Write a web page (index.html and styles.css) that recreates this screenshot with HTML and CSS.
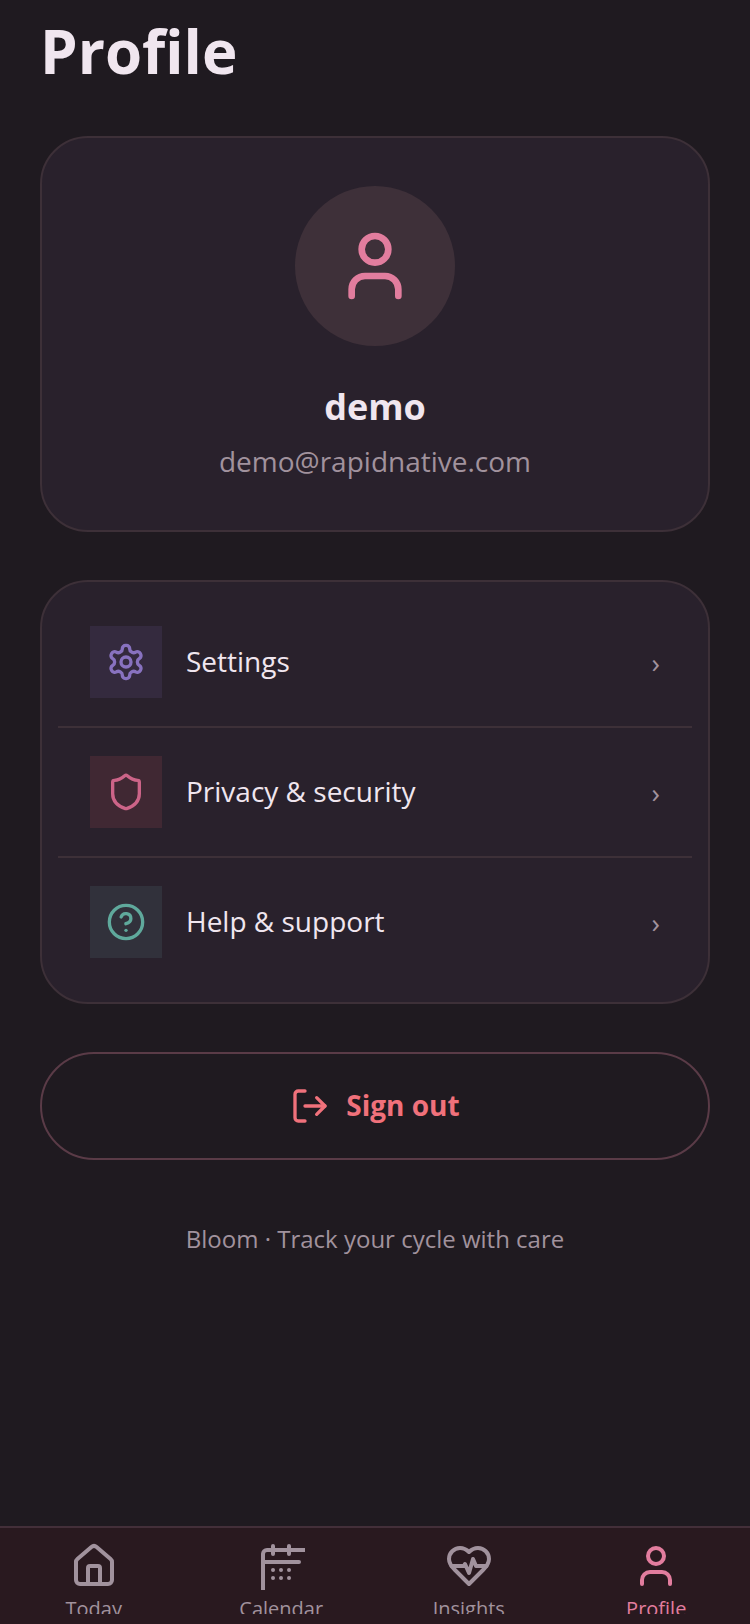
FILE: index.html
```html
<!DOCTYPE html>
<html lang="en">
<head>
<meta charset="utf-8">
<meta name="viewport" content="width=device-width, initial-scale=1">
<title>Profile</title>
<link rel="stylesheet" href="styles.css">
</head>
<body>
<main class="screen">
  <h1 class="title">Profile</h1>

  <section class="card user">
    <div class="avatar">
      <svg class="icon icon-xl" viewBox="0 0 24 24" aria-hidden="true"><path d="M19 21v-2a4 4 0 0 0-4-4H9a4 4 0 0 0-4 4v2"/><circle cx="12" cy="7" r="4"/></svg>
    </div>
    <h2 class="name">demo</h2>
    <p class="email">demo@rapidnative.com</p>
  </section>

  <nav class="card menu" aria-label="Account">
    <a class="row" href="#settings">
      <span class="tile tile-violet"><svg class="icon icon-md" viewBox="0 0 24 24" aria-hidden="true"><path d="M12.22 2h-.44a2 2 0 0 0-2 2v.18a2 2 0 0 1-1 1.73l-.43.25a2 2 0 0 1-2 0l-.15-.08a2 2 0 0 0-2.73.73l-.22.38a2 2 0 0 0 .73 2.73l.15.1a2 2 0 0 1 1 1.72v.51a2 2 0 0 1-1 1.74l-.15.09a2 2 0 0 0-.73 2.73l.22.38a2 2 0 0 0 2.73.73l.15-.08a2 2 0 0 1 2 0l.43.25a2 2 0 0 1 1 1.73V20a2 2 0 0 0 2 2h.44a2 2 0 0 0 2-2v-.18a2 2 0 0 1 1-1.73l.43-.25a2 2 0 0 1 2 0l.15.08a2 2 0 0 0 2.73-.73l.22-.39a2 2 0 0 0-.73-2.73l-.15-.08a2 2 0 0 1-1-1.74v-.5a2 2 0 0 1 1-1.74l.15-.09a2 2 0 0 0 .73-2.73l-.22-.38a2 2 0 0 0-2.73-.73l-.15.08a2 2 0 0 1-2 0l-.43-.25a2 2 0 0 1-1-1.73V4a2 2 0 0 0-2-2z"/><circle cx="12" cy="12" r="3"/></svg></span>
      <span class="label">Settings</span>
      <span class="chevron">›</span>
    </a>
    <a class="row" href="#privacy">
      <span class="tile tile-rose"><svg class="icon icon-md" viewBox="0 0 24 24" aria-hidden="true"><path d="M20 13c0 5-3.5 7.5-7.66 8.95a1 1 0 0 1-.67-.01C7.5 20.5 4 18 4 13V6a1 1 0 0 1 1-1c2 0 4.5-1.2 6.24-2.72a1.17 1.17 0 0 1 1.52 0C14.51 3.81 17 5 19 5a1 1 0 0 1 1 1z"/></svg></span>
      <span class="label">Privacy &amp; security</span>
      <span class="chevron">›</span>
    </a>
    <a class="row" href="#help">
      <span class="tile tile-teal"><svg class="icon icon-md" viewBox="0 0 24 24" aria-hidden="true"><circle cx="12" cy="12" r="10"/><path d="M9.09 9a3 3 0 0 1 5.83 1c0 2-3 3-3 3"/><path d="M12 17h.01"/></svg></span>
      <span class="label">Help &amp; support</span>
      <span class="chevron">›</span>
    </a>
  </nav>

  <button class="sign-out" type="button">
    <svg class="icon icon-md" viewBox="0 0 24 24" aria-hidden="true"><path d="m16 17 5-5-5-5"/><path d="M21 12H9"/><path d="M9 21H5a2 2 0 0 1-2-2V5a2 2 0 0 1 2-2h4"/></svg>
    <span class="sign-out-text">Sign out</span>
  </button>

  <p class="tagline">Bloom · Track your cycle with care</p>
</main>

<nav class="tabs" aria-label="Main">
  <a class="tab" href="#today">
    <svg class="icon icon-lg" viewBox="0 0 24 24" aria-hidden="true"><path d="M15 21v-8a1 1 0 0 0-1-1h-4a1 1 0 0 0-1 1v8"/><path d="M3 10a2 2 0 0 1 .709-1.528l7-5.999a2 2 0 0 1 2.582 0l7 5.999A2 2 0 0 1 21 10v9a2 2 0 0 1-2 2H5a2 2 0 0 1-2-2z"/></svg>
    <span>Today</span>
  </a>
  <a class="tab" href="#calendar">
    <svg class="icon icon-lg" viewBox="0 0 24 24" aria-hidden="true"><path d="M8 2v4M16 2v4"/><rect x="3" y="4" width="36" height="36" rx="2"/><path d="M3 10h18M8 14h.01M12 14h.01M16 14h.01M8 18h.01M12 18h.01M16 18h.01"/></svg>
    <span>Calendar</span>
  </a>
  <a class="tab" href="#insights">
    <svg class="icon icon-lg" viewBox="0 0 24 24" aria-hidden="true"><path d="M19 14c1.49-1.46 3-3.21 3-5.5A5.5 5.5 0 0 0 16.5 3c-1.76 0-3 .5-4.5 2-1.5-1.5-2.74-2-4.5-2A5.5 5.5 0 0 0 2 8.5c0 2.3 1.5 4.05 3 5.5l7 7Z"/><path d="M3.22 12H9.5l.5-1 2 4.5 2-7 1.5 3.5h5.27"/></svg>
    <span>Insights</span>
  </a>
  <a class="tab tab-active" href="#profile" aria-current="page">
    <svg class="icon icon-lg" viewBox="0 0 24 24" aria-hidden="true"><path d="M19 21v-2a4 4 0 0 0-4-4H9a4 4 0 0 0-4 4v2"/><circle cx="12" cy="7" r="4"/></svg>
    <span>Profile</span>
  </a>
</nav>
</body>
</html>
```
FILE: styles.css
```css
:root {
  --bg: #1f1a20;
  --card: #29212c;
  --line: #3d3038;
  --text: #f0e6ef;
  --muted: #a1929d;
  --pink: #e27d9e;
}

* { box-sizing: border-box; }

body {
  display: flex;
  flex-direction: column;
  min-height: 100vh;
  margin: 0;
  background: var(--bg);
  color: var(--text);
  font-family: "Open Sans", "Noto Sans", sans-serif;
  font-size: 28px;
  line-height: 40px;
}

h1, h2, p { margin: 0; }
a { color: inherit; text-decoration: none; }

.icon {
  flex: none;
  fill: none;
  stroke: currentColor;
  stroke-width: 2;
  stroke-linecap: round;
  stroke-linejoin: round;
}
.icon-md { width: 40px; height: 40px; }
.icon-lg { width: 48px; height: 48px; }
.icon-xl { width: 80px; height: 80px; }

.screen {
  display: flex;
  flex: 1;
  flex-direction: column;
  gap: 48px;
  padding: 16px 40px 48px;
}

.title {
  padding-bottom: 2px;
  font-size: 60px;
  font-weight: 700;
  line-height: 70px;
}

.card {
  border: 2px solid var(--line);
  border-radius: 48px;
  background: var(--card);
}

.user {
  display: flex;
  flex-direction: column;
  align-items: center;
  padding: 48px;
}

.avatar {
  display: grid;
  place-items: center;
  width: 160px;
  height: 160px;
  margin-bottom: 32px;
  border-radius: 50%;
  background: #3e3039;
  color: var(--pink);
}

.name {
  margin-bottom: 4px;
  font-size: 36px;
  font-weight: 700;
  line-height: 58px;
}

.email {
  color: var(--muted);
  line-height: 42px;
}

.menu { padding: 16px; }

.row {
  display: flex;
  align-items: center;
  gap: 24px;
  padding: 28px 32px;
}
.row + .row { border-top: 2px solid var(--line); }

.tile {
  display: grid;
  place-items: center;
  width: 72px;
  height: 72px;
}
.tile-violet { background: #342a3e; color: #8872bf; }
.tile-rose { background: #402833; color: #cc6488; }
.tile-teal { background: #31313b; color: #5fa99c; }

.label { flex: 1; }
.label, .sign-out-text { padding-bottom: 2px; }
.chevron { color: var(--muted); }

.sign-out {
  display: flex;
  align-items: center;
  justify-content: center;
  gap: 16px;
  padding: 31px;
  border: 2px solid #5a3b47;
  border-radius: 54px;
  background: transparent;
  color: #f0717b;
  font: inherit;
  font-weight: 700;
}

.tagline {
  margin-top: 16px;
  color: var(--muted);
  font-size: 24px;
  line-height: 30px;
  text-align: center;
}

.tabs {
  position: sticky;
  bottom: 0;
  display: flex;
  padding: 14px 0 10px;
  border-top: 2px solid #432f39;
  background: #29191f;
}

.tab {
  display: flex;
  flex: 1;
  flex-direction: column;
  align-items: center;
  gap: 4px;
  height: 72px;
  overflow: hidden;
  color: var(--muted);
  font-size: 20px;
  line-height: 30px;
}
.tab-active { color: var(--pink); }
```
